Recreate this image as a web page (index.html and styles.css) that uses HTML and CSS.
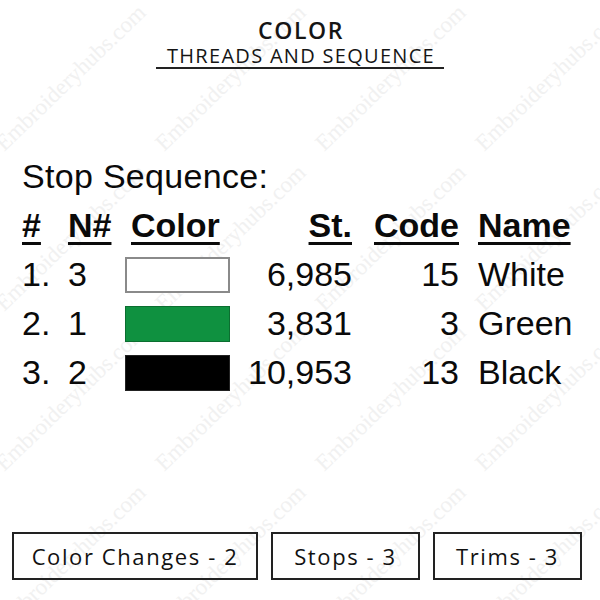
FILE: index.html
```html
<!DOCTYPE html>
<html>
<head>
<meta charset="utf-8">
<link rel="stylesheet" href="styles.css">
</head>
<body>
<div class="page">
  <div class="watermark" aria-hidden="true">
    <span class="wm" style="left:7px;top:155px">Embroideryhubs.com</span>
    <span class="wm" style="left:167px;top:155px">Embroideryhubs.com</span>
    <span class="wm" style="left:327px;top:155px">Embroideryhubs.com</span>
    <span class="wm" style="left:487px;top:155px">Embroideryhubs.com</span>
    <span class="wm" style="left:7px;top:315px">Embroideryhubs.com</span>
    <span class="wm" style="left:167px;top:315px">Embroideryhubs.com</span>
    <span class="wm" style="left:327px;top:315px">Embroideryhubs.com</span>
    <span class="wm" style="left:487px;top:315px">Embroideryhubs.com</span>
    <span class="wm" style="left:7px;top:475px">Embroideryhubs.com</span>
    <span class="wm" style="left:167px;top:475px">Embroideryhubs.com</span>
    <span class="wm" style="left:327px;top:475px">Embroideryhubs.com</span>
    <span class="wm" style="left:487px;top:475px">Embroideryhubs.com</span>
    <span class="wm" style="left:7px;top:635px">Embroideryhubs.com</span>
    <span class="wm" style="left:167px;top:635px">Embroideryhubs.com</span>
    <span class="wm" style="left:327px;top:635px">Embroideryhubs.com</span>
    <span class="wm" style="left:487px;top:635px">Embroideryhubs.com</span>
  </div>

  <header class="title">
    <div class="title-main">COLOR</div>
    <div class="title-sub">THREADS AND SEQUENCE</div>
  </header>

  <section class="seq">
    <div class="seq-heading">Stop Sequence:</div>
    <div class="seq-grid">
      <div class="th">#</div>
      <div class="th">N#</div>
      <div class="th th-color">Color</div>
      <div class="th num">St.</div>
      <div class="th num">Code</div>
      <div class="th name">Name</div>

      <div>1.</div><div>3</div><div class="sw-cell"><span class="swatch sw-white"></span></div><div class="num">6,985</div><div class="num">15</div><div class="name">White</div>
      <div>2.</div><div>1</div><div class="sw-cell"><span class="swatch sw-green"></span></div><div class="num">3,831</div><div class="num">3</div><div class="name">Green</div>
      <div>3.</div><div>2</div><div class="sw-cell"><span class="swatch sw-black"></span></div><div class="num">10,953</div><div class="num">13</div><div class="name">Black</div>
    </div>
  </section>

  <footer class="stats">
    <div class="stat stat-wide">Color Changes - 2</div>
    <div class="stat">Stops - 3</div>
    <div class="stat">Trims - 3</div>
  </footer>
</div>
</body>
</html>
```

FILE: styles.css
```css
html, body {
  margin: 0;
  padding: 0;
  background: #ffffff;
}

.page {
  position: relative;
  width: 600px;
  height: 600px;
  overflow: hidden;
  display: flex;
  flex-direction: column;
  color: #111;
}

.watermark {
  position: absolute;
  inset: 0;
  overflow: hidden;
  pointer-events: none;
  z-index: 0;
}

.wm {
  position: absolute;
  font-family: "Liberation Serif", serif;
  font-size: 23px;
  line-height: 1;
  color: #f1f1f1;
  white-space: nowrap;
  transform-origin: 0 100%;
  transform: translateY(-100%) rotate(-44deg);
}

.title, .seq, .stats {
  position: relative;
  z-index: 1;
}

.title {
  display: flex;
  flex-direction: column;
  align-items: center;
  padding-top: 15px;
  font-family: "Open Sans", sans-serif;
  color: #151515;
}

.title-main {
  font-size: 23px;
  font-weight: 600;
  line-height: 30px;
  letter-spacing: 1.6px;
  padding-left: 2px;
}

.title-sub {
  font-size: 20px;
  line-height: 22px;
  letter-spacing: 1.3px;
  padding: 0 9px 0 11px;
  border-bottom: 2px solid #222;
}

.seq {
  margin-top: 83px;
  padding-left: 22px;
  font-family: "Liberation Sans", Arial, sans-serif;
  font-size: 34px;
  color: #0a0a0a;
}

.seq-heading {
  line-height: 49px;
  letter-spacing: 0.3px;
}

.seq-grid {
  display: grid;
  grid-template-columns: 46px 57px 112px 115px 107px auto;
  grid-auto-rows: 49px;
  align-items: center;
}

.th {
  font-weight: 700;
  text-decoration: underline;
  text-decoration-thickness: 3px;
  text-underline-offset: 5px;
}

.th-color {
  padding-left: 6px;
}

.num {
  text-align: right;
}

.name {
  padding-left: 19px;
}

.sw-cell {
  display: flex;
  align-items: center;
}

.swatch {
  display: block;
  width: 105px;
  height: 36px;
  box-sizing: border-box;
}

.sw-white {
  background: #ffffff;
  border: 2px solid #8a8a8a;
}

.sw-green {
  background: #0f9140;
  border: 1px solid #0b6e30;
}

.sw-black {
  background: #000000;
  border: 1px solid #222;
}

.stats {
  margin-top: auto;
  margin-bottom: 20px;
  display: flex;
  gap: 13px;
  padding-left: 12px;
  font-family: "Open Sans", sans-serif;
  font-size: 22px;
  letter-spacing: 1.6px;
  color: #111;
}

.stat {
  box-sizing: border-box;
  width: 149px;
  height: 48px;
  border: 2px solid #222;
  display: flex;
  align-items: center;
  justify-content: center;
}

.stat-wide {
  width: 246px;
}
```
